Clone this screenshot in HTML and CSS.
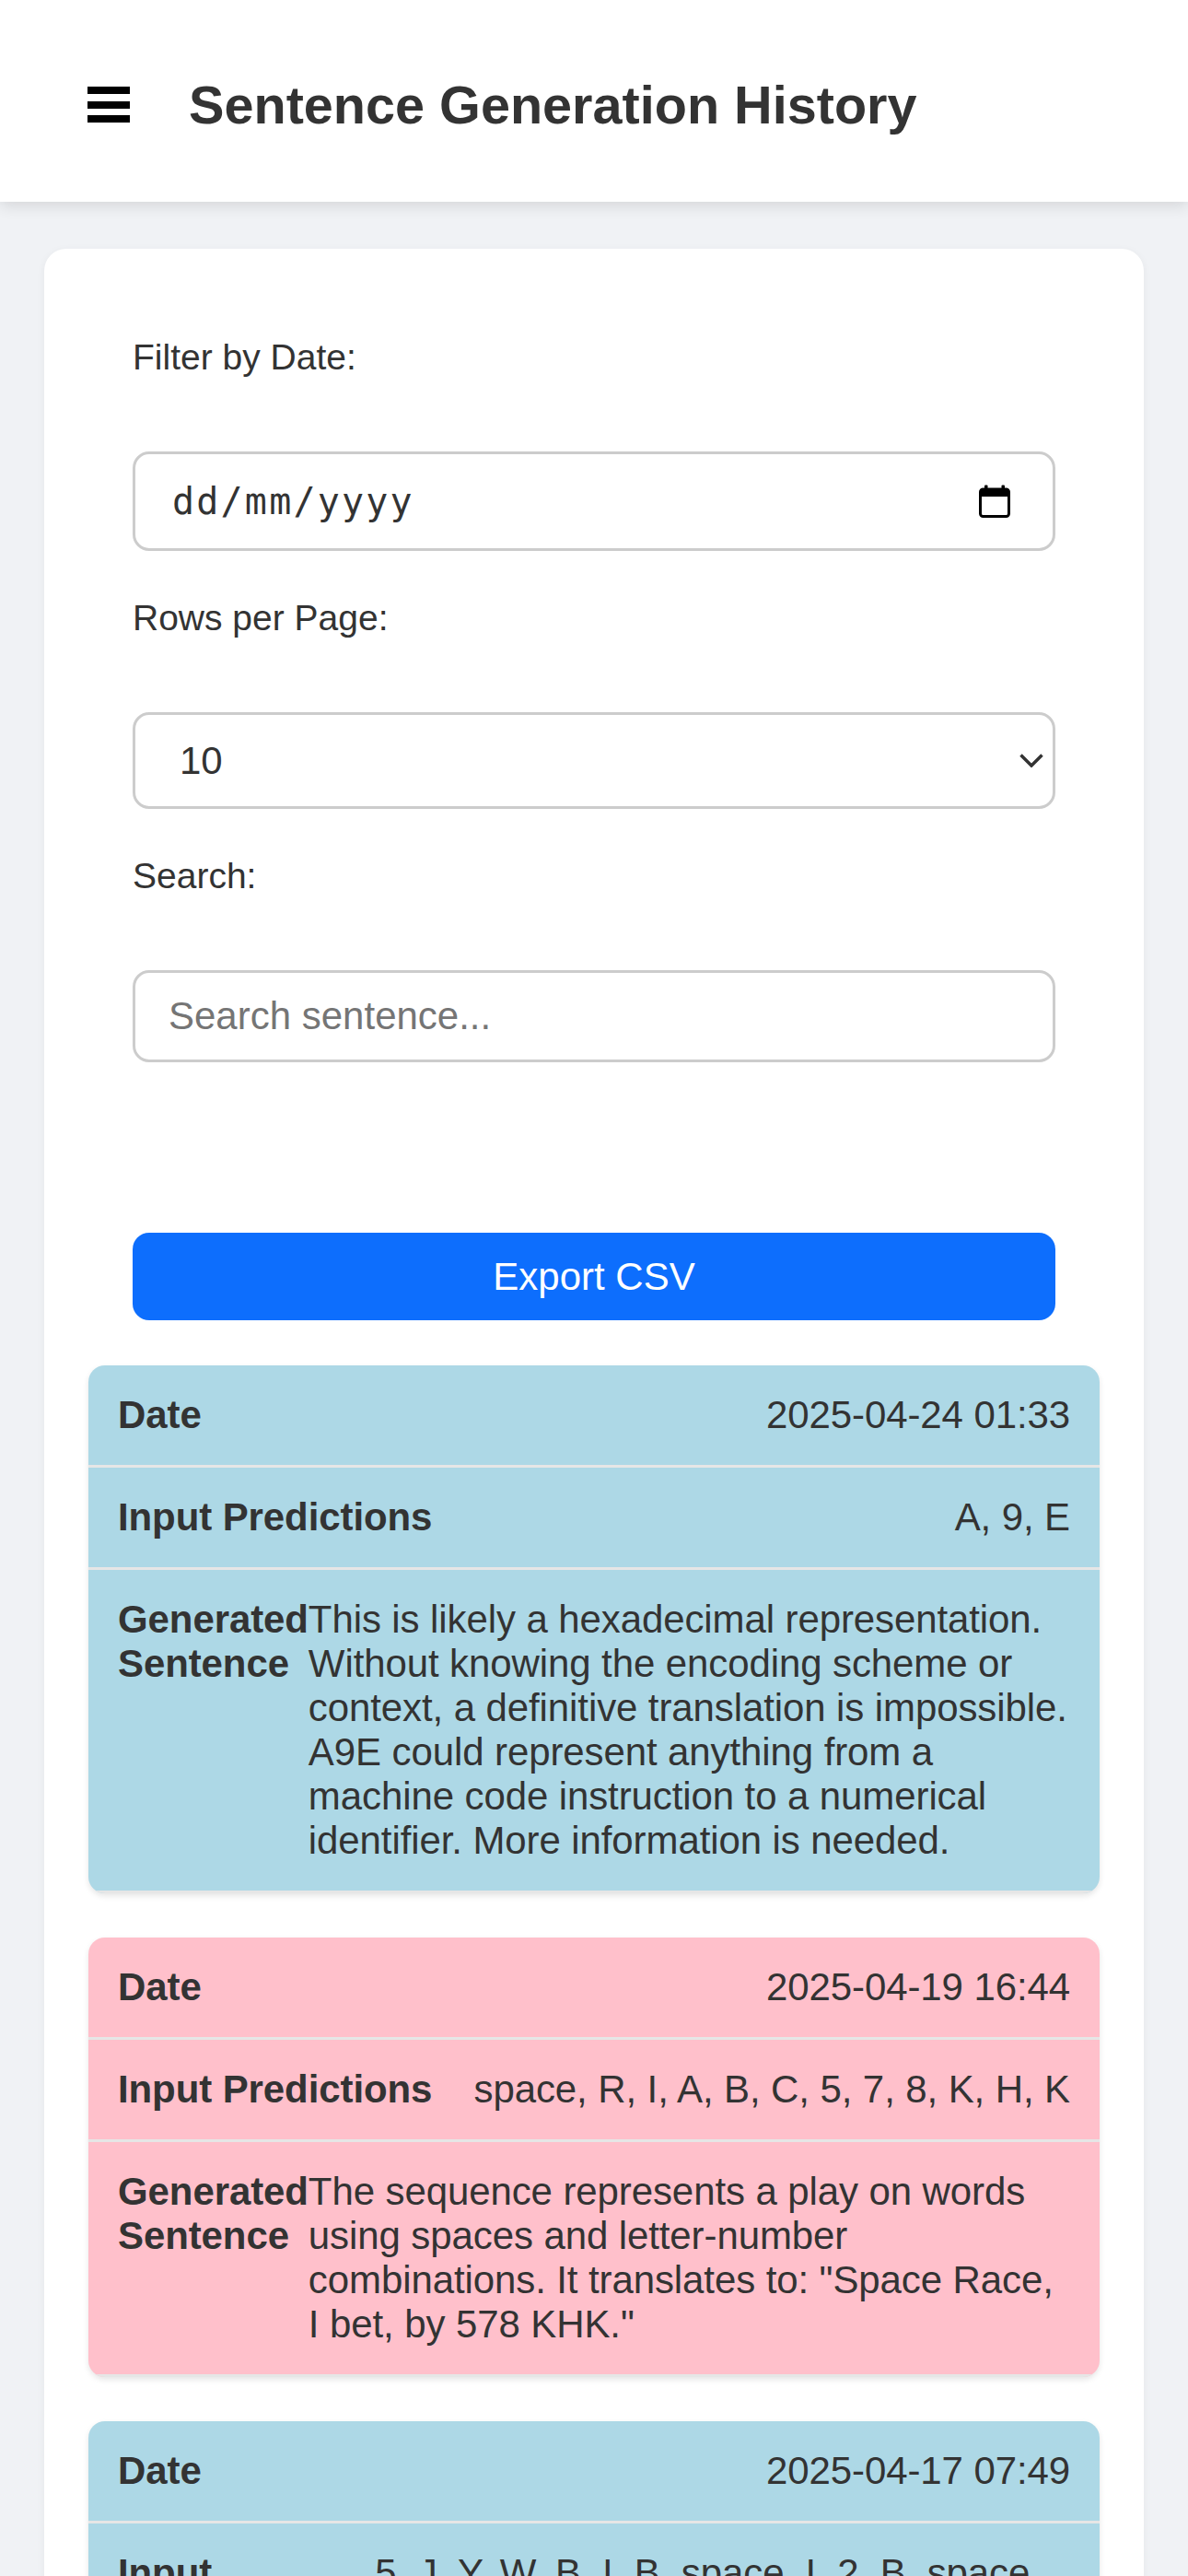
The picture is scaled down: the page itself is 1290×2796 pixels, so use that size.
FILE: index.html
```html
<!DOCTYPE html>
<html lang="en">
<head>
<meta charset="utf-8">
<title>Sentence Generation History</title>
<link rel="stylesheet" href="styles.css">
</head>
<body>
<header class="topbar">
  <button class="menu-btn" aria-label="Menu">
    <svg width="46" height="39" viewBox="0 0 46 39"><rect x="0" y="0" width="46" height="8"/><rect x="0" y="16" width="46" height="8"/><rect x="0" y="31" width="46" height="8"/></svg>
  </button>
  <h1 class="title">Sentence Generation History</h1>
</header>
<main class="page">
  <section class="card">
    <div class="filters">
      <div class="field">
        <label class="field-label">Filter by Date:</label>
        <div class="date-input">
          <span class="date-text">dd/mm/yyyy</span>
          <svg class="cal-icon" width="34" height="36" viewBox="0 0 34 36"><rect x="1.5" y="5" width="31" height="29.5" rx="3" fill="none" stroke="#000" stroke-width="3"/><rect x="1.5" y="5" width="31" height="8" fill="#000"/><rect x="6" y="0.5" width="3.5" height="6" rx="1" fill="#000"/><rect x="24.5" y="0.5" width="3.5" height="6" rx="1" fill="#000"/></svg>
        </div>
      </div>
      <div class="field">
        <label class="field-label">Rows per Page:</label>
        <div class="select-wrap">
          <select class="select"><option>10</option><option>25</option><option>50</option></select>
          <svg class="chevron" width="26" height="15" viewBox="0 0 26 15"><path d="M1.5 1.5 L13 13 L24.5 1.5" fill="none" stroke="#333" stroke-width="3.5"/></svg>
        </div>
      </div>
      <div class="field">
        <label class="field-label">Search:</label>
        <input class="search" type="text" placeholder="Search sentence...">
      </div>
      <button class="export-btn">Export CSV</button>
    </div>
    <div class="entries">
      <div class="entry blue">
        <div class="row"><span class="row-label">Date</span><span class="row-value">2025-04-24 01:33</span></div>
        <div class="row"><span class="row-label">Input Predictions</span><span class="row-value">A, 9, E</span></div>
        <div class="row"><span class="row-label">Generated Sentence</span><span class="row-value">This is likely a hexadecimal representation. Without knowing the encoding scheme or context, a definitive translation is impossible. A9E could represent anything from a machine code instruction to a numerical identifier. More information is needed.</span></div>
      </div>
      <div class="entry pink">
        <div class="row"><span class="row-label">Date</span><span class="row-value">2025-04-19 16:44</span></div>
        <div class="row"><span class="row-label">Input Predictions</span><span class="row-value">space, R, I, A, B, C, 5, 7, 8, K, H, K</span></div>
        <div class="row"><span class="row-label">Generated Sentence</span><span class="row-value">The sequence represents a play on words using spaces and letter-number combinations. It translates to: "Space Race, I bet, by 578 KHK."</span></div>
      </div>
      <div class="entry blue">
        <div class="row"><span class="row-label">Date</span><span class="row-value">2025-04-17 07:49</span></div>
        <div class="row"><span class="row-label">Input Predictions</span><span class="row-value">5, J, Y, W, B, I, B, space, I, 2, B, space, 0, K, E, W</span></div>
        <div class="row"><span class="row-label">Generated Sentence</span><span class="row-value">This sequence appears to be a random mix of letters, numbers and spaces with no clear meaning.</span></div>
      </div>
    </div>
  </section>
</main>
</body>
</html>
```
FILE: styles.css
```css
html, body {
  margin: 0;
  padding: 0;
}

body {
  background: #f0f2f5;
  font-family: "Liberation Sans", Arial, sans-serif;
  color: #333;
}

.topbar {
  position: relative;
  z-index: 1;
  height: 219px;
  box-sizing: border-box;
  background: #fff;
  display: flex;
  align-items: center;
  gap: 64px;
  padding: 8px 0 0 95px;
  box-shadow: 0 4px 16px rgba(0, 0, 0, 0.12);
}

.menu-btn {
  display: flex;
  background: none;
  border: 0;
  padding: 0;
  margin: 0;
}

.menu-btn svg {
  fill: #000;
  display: block;
}

.title {
  margin: 0;
  font-size: 57.6px;
  font-weight: 700;
  color: #333;
  line-height: normal;
}

.page {
  padding: 51px 48px 48px;
}

.card {
  background: #fff;
  border-radius: 24px;
  padding: 48px;
  box-shadow: 0 2px 10px rgba(0, 0, 0, 0.05);
}

.filters {
  padding: 48px 48px 49px;
}

.field {
  margin-bottom: 51px;
}

.field:last-of-type {
  margin-bottom: 0;
}

.field-label {
  display: block;
  font-size: 39px;
  line-height: normal;
  margin-bottom: 80px;
  color: #333;
}

.date-input {
  height: 108px;
  box-sizing: border-box;
  border: 3px solid #ccc;
  border-radius: 18px;
  display: flex;
  align-items: center;
  justify-content: space-between;
  padding: 0 46px 0 40px;
  background: #fff;
}

.date-text {
  font-family: "DejaVu Sans Mono", "Liberation Mono", monospace;
  font-size: 40px;
  letter-spacing: 2.2px;
  color: #333;
}

.cal-icon {
  display: block;
}

.select-wrap {
  position: relative;
}

.select {
  display: block;
  width: 100%;
  height: 105px;
  box-sizing: border-box;
  -webkit-appearance: none;
  appearance: none;
  border: 3px solid #ccc;
  border-radius: 18px;
  background: #fff;
  font-family: "Liberation Sans", Arial, sans-serif;
  font-size: 42px;
  color: #333;
  padding: 0 0 0 48px;
  margin: 0;
}

.chevron {
  position: absolute;
  right: 13px;
  top: 45px;
  pointer-events: none;
}

.search {
  display: block;
  width: 100%;
  height: 100px;
  box-sizing: border-box;
  border: 3px solid #ccc;
  border-radius: 18px;
  padding: 0 0 0 36px;
  margin: 0;
  font-family: "Liberation Sans", Arial, sans-serif;
  font-size: 42px;
  color: #333;
  background: #fff;
}

.search::placeholder {
  color: #757575;
}

.export-btn {
  display: block;
  width: 100%;
  height: 95px;
  margin-top: 185px;
  border: 0;
  border-radius: 18px;
  background: #0d6efd;
  color: #fff;
  font-family: "Liberation Sans", Arial, sans-serif;
  font-size: 42px;
  padding: 0;
}

.entries {
  display: flex;
  flex-direction: column;
  gap: 48px;
}

.entry {
  border-radius: 18px;
  overflow: hidden;
  box-shadow: 0 3px 6px rgba(0, 0, 0, 0.1);
}

.entry.blue {
  background: #add8e6;
}

.entry.pink {
  background: #ffc0cb;
}

.row {
  display: flex;
  justify-content: space-between;
  padding: 30px 32px;
  border-bottom: 3px solid #e6e6e6;
  font-size: 42px;
  line-height: 48px;
  color: #333;
  letter-spacing: -0.1px;
}

.row-label {
  font-weight: 700;
}
```
